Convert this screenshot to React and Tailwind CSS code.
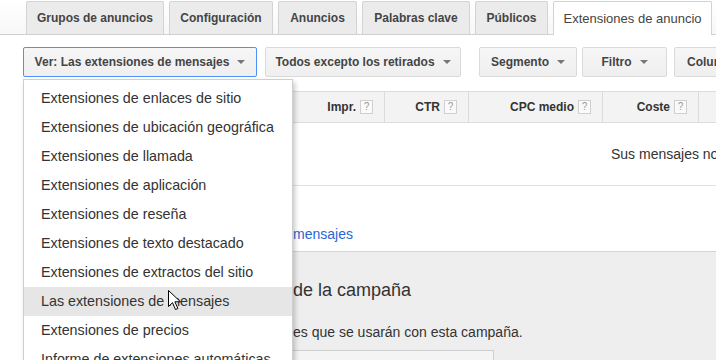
import React from 'react'

const tabs = [
  { label: 'Grupos de anuncios', w: 'w-[138px]' },
  { label: 'Configuración', w: 'w-[104px]' },
  { label: 'Anuncios', w: 'w-[79px]' },
  { label: 'Palabras clave', w: 'w-[108px]' },
  { label: 'Públicos', w: 'w-[73px]' },
]

const menuItems = [
  'Extensiones de enlaces de sitio',
  'Extensiones de ubicación geográfica',
  'Extensiones de llamada',
  'Extensiones de aplicación',
  'Extensiones de reseña',
  'Extensiones de texto destacado',
  'Extensiones de extractos del sitio',
  'Las extensiones de mensajes',
  'Extensiones de precios',
  'Informe de extensiones automáticas',
]

const Caret = () => (
  <svg width="8" height="4" viewBox="0 0 8 4" className="shrink-0">
    <path d="M0 0h8L4 4z" fill="#777" />
  </svg>
)

const Help = () => (
  <span className="ml-[4px] inline-flex h-[14px] w-[13px] items-center justify-center border border-[#d0d0d0] bg-[#fafafa] text-[10px] font-normal leading-none text-[#999]">
    ?
  </span>
)

const ToolButton = ({ label, w, active = false, left = false }) => (
  <button
    type="button"
    className={`flex h-[30px] ${w} shrink-0 items-center ${left ? 'justify-start pl-[12px]' : 'justify-center'} gap-[8px] rounded-[2px] border bg-linear-to-b from-[#f6f6f6] to-[#efefef] text-[12px] font-bold text-[#444] ${active ? 'border-[#4d90fe]' : 'border-[#dadada]'}`}
  >
    <span className="whitespace-nowrap">{label}</span>
    <Caret />
  </button>
)

const HeadCell = ({ label, w }) => (
  <div className={`flex ${w} shrink-0 items-center justify-end border-r border-[#dcdcdc] pr-[11px] text-[12px] font-bold text-[#333]`}>
    {label}
    <Help />
  </div>
)

export default function App() {
  return (
    <div className="relative h-[360px] w-[716px] overflow-hidden bg-white font-['Liberation_Sans',Arial,sans-serif]">
      {/* tabs */}
      <div className="flex h-[35px] items-end gap-[5px] border-b border-[#d0d0d0] bg-linear-to-b from-white to-[#f7f7f7] pl-[26px]">
        {tabs.map((t) => (
          <div
            key={t.label}
            className={`flex h-[33px] ${t.w} shrink-0 items-center justify-center rounded-t-[2px] border border-b-0 border-[#d3d3d3] bg-[#ebebeb] text-[12px] font-bold whitespace-nowrap text-[#444]`}
          >
            {t.label}
          </div>
        ))}
        <div className="-mb-px flex h-[34px] w-[159px] shrink-0 items-center justify-center rounded-t-[2px] border border-b-0 border-[#d3d3d3] bg-white text-[13px] whitespace-nowrap text-[#444]">
          Extensiones de anuncio
        </div>
      </div>

      {/* toolbar */}
      <div className="mt-[12px] flex items-center pl-[23px]">
        <ToolButton label="Ver: Las extensiones de mensajes" w="w-[234px]" active />
        <div className="ml-[8px]">
          <ToolButton label="Todos excepto los retirados" w="w-[196px]" />
        </div>
        <div className="mx-[9px] h-[30px] w-px bg-[#e4e4e4]" />
        <ToolButton label="Segmento" w="w-[98px]" />
        <div className="ml-[5px]">
          <ToolButton label="Filtro" w="w-[85px]" />
        </div>
        <div className="ml-[7px]">
          <ToolButton label="Columnas" w="w-[110px]" left />
        </div>
      </div>

      {/* table */}
      <div className="ml-[23px] mt-[14px]">
        <div className="flex h-[32px] border-y border-[#dcdcdc] bg-[#f3f3f3]">
          <HeadCell label="Impr." w="w-[362px]" />
          <HeadCell label="CTR" w="w-[84px]" />
          <HeadCell label="CPC medio" w="w-[134px]" />
          <HeadCell label="Coste" w="w-[96px]" />
          <div className="flex-1" />
        </div>
        <div className="flex h-[63px] items-center border-b border-[#e3e3e3] pl-[588px] text-[14px] whitespace-nowrap text-[#333]">
          Sus mensajes no tienen datos
        </div>
        <div className="h-[65px] pl-[270px] pt-[40px] text-[14px] leading-[16px] whitespace-nowrap text-[#2a66d2]">
          mensajes
        </div>
      </div>

      {/* campaign section */}
      <div className="ml-[23px] border-t border-[#d4d4d4] bg-[#eeeeee] pt-[27px] whitespace-nowrap text-[#333]">
        <div className="pl-[270px] text-[18px] leading-[22px]">de la campaña</div>
        <div className="mt-[22px] pl-[270px] text-[14px] leading-[18px]">es que se usarán con esta campaña.</div>
        <div className="mt-[9px] flex items-start pl-[17px]">
          <div className="h-[30px] w-[454px] shrink-0 border border-[#cfcfcf] bg-[#f4f4f4]" />
          <div className="ml-[24px] mt-[5px] text-[13px] text-[#444]">Extensiones de mensajes de la campaña</div>
        </div>
      </div>

      {/* dropdown menu */}
      <div className="absolute left-[23px] top-[79px] w-[270px] border border-[#cfcfcf] bg-white pt-[4px] shadow-[2px_3px_5px_rgba(0,0,0,0.22)]">
        {menuItems.map((item, i) => (
          <div
            key={item}
            className={`flex h-[29px] items-center pl-[17px] text-[14.3px] whitespace-nowrap text-[#333] ${i === 7 ? 'bg-[#e6e6e6]' : ''}`}
          >
            {item}
          </div>
        ))}
      </div>

      {/* mouse cursor */}
      <svg className="absolute left-[168px] top-[290px]" width="13" height="21" viewBox="0 0 13 21">
        <path d="M0.5 0.5v16l4-3.8 3 6.8 2.4-1-3-6.7h5.6z" fill="#fff" stroke="#000" strokeWidth="1" strokeLinejoin="round" />
      </svg>
    </div>
  )
}
